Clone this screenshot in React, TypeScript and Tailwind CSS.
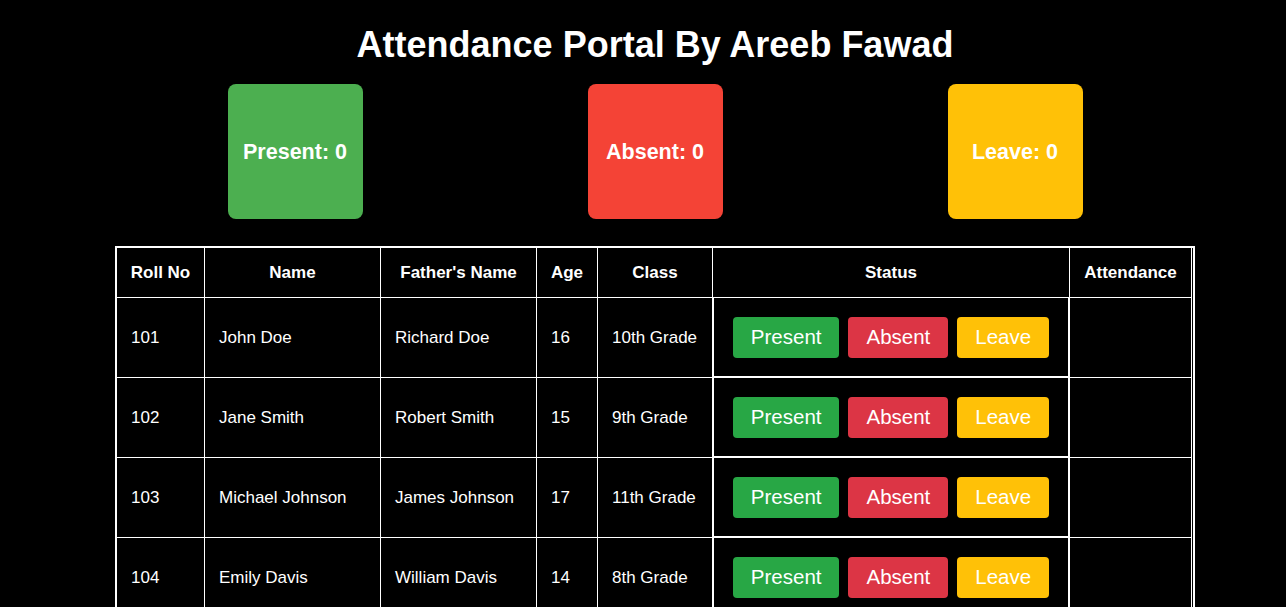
const students = [
  { roll: 101, name: 'John Doe', father: 'Richard Doe', age: 16, cls: '10th Grade' },
  { roll: 102, name: 'Jane Smith', father: 'Robert Smith', age: 15, cls: '9th Grade' },
  { roll: 103, name: 'Michael Johnson', father: 'James Johnson', age: 17, cls: '11th Grade' },
  { roll: 104, name: 'Emily Davis', father: 'William Davis', age: 14, cls: '8th Grade' },
];

const headers = ['Roll No', 'Name', "Father's Name", 'Age', 'Class', 'Status', 'Attendance'];

const cell = 'flex items-center border-r border-b border-white pl-[14px]';

const App = () => {
  return (
    <div
      className="w-screen h-screen overflow-hidden bg-black text-white"
      style={{ fontFamily: '"Liberation Sans", Arial, sans-serif' }}
    >
      <div className="w-[1310px] flex flex-col items-center">
        <h1 className="mt-[24px] text-[36px] leading-[41px] font-bold">
          Attendance Portal By Areeb Fawad
        </h1>

        <div className="flex gap-[225px] mt-[19px]">
          <div className="w-[135px] h-[135px] rounded-[8px] bg-[#4caf50] flex items-center justify-center pt-px text-[21.5px] font-bold">
            Present: 0
          </div>
          <div className="w-[135px] h-[135px] rounded-[8px] bg-[#f44336] flex items-center justify-center pt-px text-[21.5px] font-bold">
            Absent: 0
          </div>
          <div className="w-[135px] h-[135px] rounded-[8px] bg-[#ffc107] flex items-center justify-center pt-px text-[21.5px] font-bold">
            Leave: 0
          </div>
        </div>

        <div className="mt-[27px] border-t-2 border-l-2 border-r-2 border-white pr-px">
          <div className="grid grid-cols-[88px_176px_156px_61px_115px_357px_122px] text-[17px]">
            {headers.map((h) => (
              <div
                key={h}
                className="h-[50px] flex items-center justify-center border-r border-b border-white font-bold"
              >
                {h}
              </div>
            ))}

            {students.map((s) => (
              <div key={s.roll} className="contents">
                <div className={`${cell} h-[80px]`}>{s.roll}</div>
                <div className={`${cell} h-[80px]`}>{s.name}</div>
                <div className={`${cell} h-[80px]`}>{s.father}</div>
                <div className={`${cell} h-[80px]`}>{s.age}</div>
                <div className={`${cell} h-[80px]`}>{s.cls}</div>
                <div className="h-[80px] flex items-center justify-center gap-[9px] border-l border-r-2 border-b-2 border-white">
                  <button className="h-[41px] px-[18px] rounded-[4px] bg-[#28a745] text-white text-[20.5px]">
                    Present
                  </button>
                  <button className="h-[41px] px-[18px] rounded-[4px] bg-[#dc3545] text-white text-[20.5px]">
                    Absent
                  </button>
                  <button className="h-[41px] px-[18px] rounded-[4px] bg-[#ffc107] text-white text-[20.5px]">
                    Leave
                  </button>
                </div>
                <div className="h-[80px] border-r border-b border-white"></div>
              </div>
            ))}
          </div>
        </div>
      </div>
    </div>
  );
};

export default App;
